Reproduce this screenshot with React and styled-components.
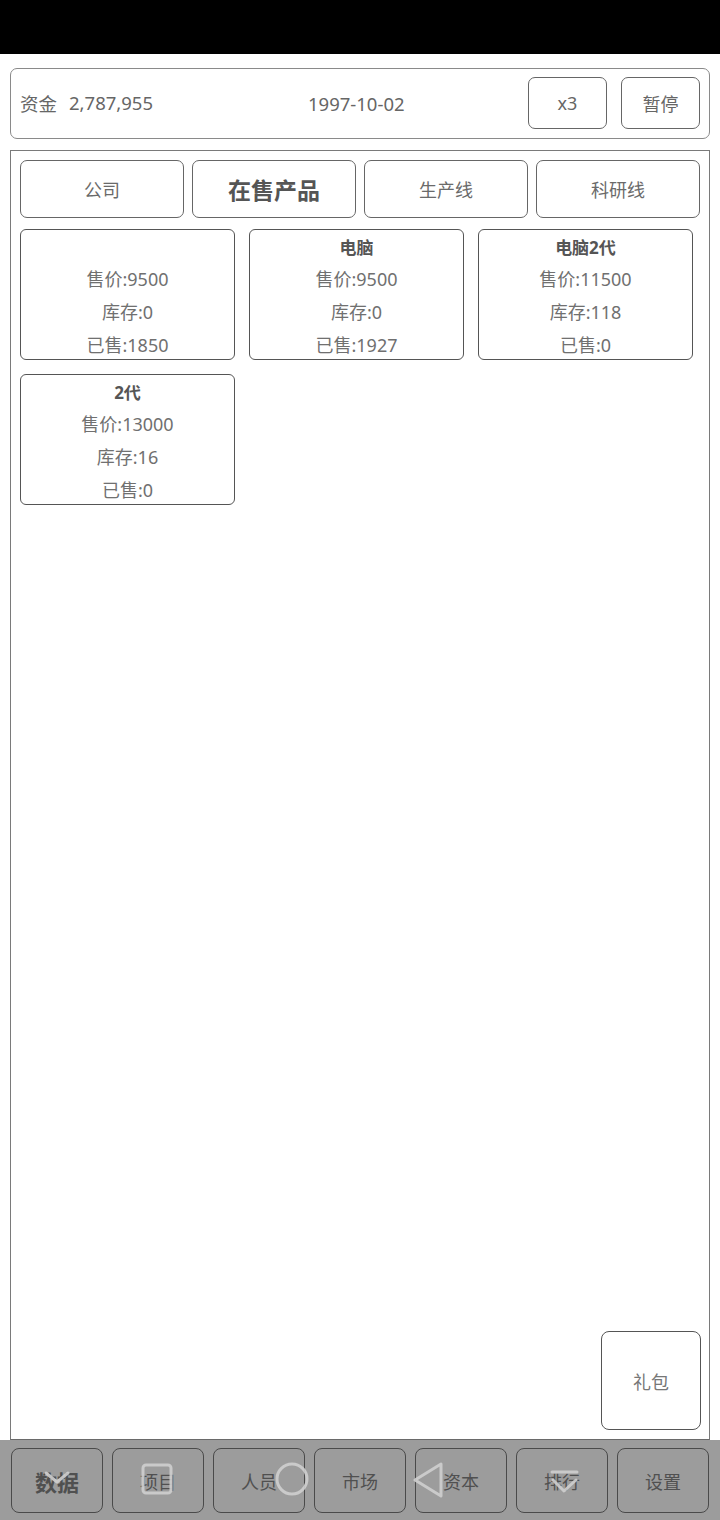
import React from "react";
import styled, { createGlobalStyle } from "styled-components";

const Global = createGlobalStyle`
  html, body { margin: 0; padding: 0; background: #fff; }
  body { font-family: "Noto Sans", "Noto Sans CJK SC", sans-serif; }
  * { box-sizing: border-box; }
`;

const Screen = styled.div`
  width: 720px;
  height: 1520px;
  display: flex;
  flex-direction: column;
  background: #fff;
  position: relative;
  overflow: hidden;
`;

const StatusBar = styled.div`
  height: 54px;
  background: #000;
  flex-shrink: 0;
`;

const Header = styled.div`
  margin: 14px 10px 0 10px;
  height: 71px;
  border: 1px solid #8a8a8a;
  border-radius: 7px;
  display: flex;
  align-items: center;
  padding: 0 9px 1px 9px;
  color: #666;
  font-size: 18.5px;
  flex-shrink: 0;
`;

const Funds = styled.div`
  width: 288px;
  display: flex;
  gap: 12px;
`;

const DateText = styled.div`
  flex: 1;
`;

const HeaderButton = styled.div`
  width: 79px;
  height: 52px;
  border: 1px solid #666;
  border-radius: 7px;
  display: flex;
  align-items: center;
  justify-content: center;
  margin-left: ${(p) => p.$gap || 0}px;
  color: #666;
  font-size: 18px;
`;

const Panel = styled.div`
  margin: 11px 10px 0 10px;
  flex: 1;
  border: 1px solid #7a7a7a;
  border-bottom: 1px solid #6a6a6a;
  padding: 9px;
  display: flex;
  flex-direction: column;
`;

const Tabs = styled.div`
  display: grid;
  grid-template-columns: repeat(4, 164px);
  gap: 8px;
`;

const Tab = styled.div`
  height: 58px;
  border: 1px solid #666;
  border-radius: 7px;
  display: flex;
  align-items: center;
  justify-content: center;
  color: ${(p) => (p.$active ? "#555" : "#6a6a6a")};
  font-size: ${(p) => (p.$active ? "23px" : "18px")};
  font-weight: ${(p) => (p.$active ? 700 : 400)};
`;

const Grid = styled.div`
  margin-top: 11px;
  display: grid;
  grid-template-columns: repeat(3, 215px);
  column-gap: 14px;
  row-gap: 14px;
`;

const Card = styled.div`
  height: 131px;
  border: 1px solid #555;
  border-radius: 6px;
  text-align: center;
  padding-top: 2px;
  overflow: hidden;
`;

const CardTitle = styled.div`
  height: 31px;
  line-height: 31px;
  font-size: 17px;
  font-weight: 700;
  color: #555;
`;

const CardLine = styled.div`
  height: 33px;
  line-height: 33px;
  font-size: 18px;
  color: #707070;
`;

const Spacer = styled.div`
  flex: 1;
`;

const GiftButton = styled.div`
  align-self: flex-end;
  margin-right: -1px;
  width: 100px;
  height: 99px;
  border: 1px solid #555;
  border-radius: 8px;
  display: flex;
  align-items: center;
  justify-content: center;
  color: #777;
  font-size: 18px;
`;

const BottomBar = styled.div`
  height: 80px;
  flex-shrink: 0;
  background: #9c9c9c;
  padding: 8px 0 0 11px;
  display: flex;
  gap: 9px;
  position: relative;
`;

const NavButton = styled.div`
  width: 92px;
  height: 65px;
  border: 1px solid #4a4a4a;
  border-radius: 8px;
  display: flex;
  align-items: center;
  justify-content: center;
  color: #505050;
  font-size: ${(p) => (p.$active ? "22px" : "18px")};
  font-weight: ${(p) => (p.$active ? 700 : 400)};
`;

const NavOverlay = styled.svg`
  position: absolute;
  left: 0;
  top: 0;
  width: 720px;
  height: 80px;
  pointer-events: none;
`;

const products = [
  { name: "", price: 9500, stock: 0, sold: 1850 },
  { name: "电脑", price: 9500, stock: 0, sold: 1927 },
  { name: "电脑2代", price: 11500, stock: 118, sold: 0 },
  { name: "2代", price: 13000, stock: 16, sold: 0 },
];

const tabs = ["公司", "在售产品", "生产线", "科研线"];
const navs = ["数据", "项目", "人员", "市场", "资本", "排行", "设置"];

export default function App() {
  return (
    <Screen>
      <Global />
      <StatusBar />
      <Header>
        <Funds>
          <span>资金</span>
          <span>2,787,955</span>
        </Funds>
        <DateText>1997-10-02</DateText>
        <HeaderButton>x3</HeaderButton>
        <HeaderButton $gap={14}>暂停</HeaderButton>
      </Header>
      <Panel>
        <Tabs>
          {tabs.map((t, i) => (
            <Tab key={t} $active={i === 1}>
              {t}
            </Tab>
          ))}
        </Tabs>
        <Grid>
          {products.map((p, i) => (
            <Card key={i}>
              <CardTitle>{p.name}</CardTitle>
              <CardLine>售价:{p.price}</CardLine>
              <CardLine>库存:{p.stock}</CardLine>
              <CardLine>已售:{p.sold}</CardLine>
            </Card>
          ))}
        </Grid>
        <Spacer />
        <GiftButton>礼包</GiftButton>
      </Panel>
      <BottomBar>
        {navs.map((n, i) => (
          <NavButton key={n} $active={i === 0}>
            {n}
          </NavButton>
        ))}
        <NavOverlay viewBox="0 0 720 80">
          <g fill="none" stroke="#cfcfcf" strokeWidth="3" strokeLinejoin="round" strokeLinecap="round" opacity="0.9">
            <polyline points="46,33 57,42 68,33" />
            <rect x="143" y="25" width="28" height="28" rx="3" />
            <circle cx="292" cy="39" r="15" />
            <polygon points="415,40 441,24 441,56" />
            <line x1="552" y1="32" x2="577" y2="32" />
            <polyline points="553,40 564,51 576,40" />
          </g>
        </NavOverlay>
      </BottomBar>
    </Screen>
  );
}
